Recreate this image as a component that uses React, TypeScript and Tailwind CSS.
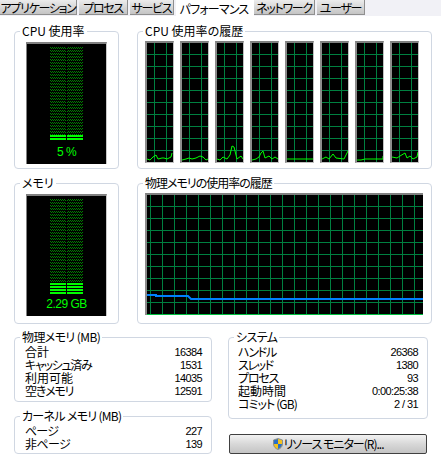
import React from 'react';

const jp = "font-['Noto_Sans_CJK_JP',sans-serif] [font-feature-settings:'palt']";
const num = "font-['Liberation_Sans',sans-serif] text-[11px] tracking-[-0.6px]";

function Tab({ label, width, active }: { label: string; width: number; active?: boolean }) {
  if (active) {
    return (
      <div style={{ width }} className="h-[17px] box-border pt-[1px] bg-white flex items-center justify-center text-[12px] tracking-[-0.8px] whitespace-nowrap leading-none text-black">
        {label}
      </div>
    );
  }
  return (
    <div
      style={{ width }}
      className="h-[15px] box-border pt-[2px] mr-[2px] border-r border-b border-[#8f8f8f] bg-gradient-to-b from-[#ececec] to-[#c4c4c4] flex items-center justify-center text-[12px] tracking-[-1.3px] whitespace-nowrap leading-none text-black"
    >
      {label}
    </div>
  );
}

function Group({ title, titleClass, className, children }: { title: string; titleClass?: string; className: string; children: React.ReactNode }) {
  return (
    <div className={`relative border border-[#d0d7e2] rounded-[4px] ${className}`}>
      <span className={`absolute left-[5px] top-[-9px] bg-white px-[2px] text-[12px] leading-[16px] text-black whitespace-nowrap ${titleClass ?? ''}`}>
        {title}
      </span>
      {children}
    </div>
  );
}

function Meter({ lit, label }: { lit: number[]; label: string }) {
  const top = lit[0];
  const id = `led${label.length}`;
  return (
    <div className="w-[81px] h-[122px] box-border border-t-2 border-l border-r border-t-[#808080] border-l-[#808080] border-r-[#c8c8c8] bg-black flex flex-col items-center">
      <svg width="79" height="98" className="block shrink-0" shapeRendering="crispEdges">
        <defs>
          <pattern id={id} width="2" height="3" patternUnits="userSpaceOnUse">
            <rect x="1" y="0" width="1" height="1" fill="#008000" />
            <rect x="0" y="1" width="1" height="1" fill="#008000" />
          </pattern>
        </defs>
        <rect x="23" y="3" width="16" height={top - 3} fill={`url(#${id})`} />
        <rect x="40" y="3" width="16" height={top - 3} fill={`url(#${id})`} />
        {lit.map((y) => (
          <g key={y}>
            <rect x="23" y={y} width="16" height="2" fill="#00ff00" />
            <rect x="40" y={y} width="16" height="2" fill="#00ff00" />
          </g>
        ))}
      </svg>
      <span className="text-[#00ff00] text-[12px] leading-[14px] mt-[3px] tracking-[-0.5px] font-['Liberation_Sans',sans-serif]">{label}</span>
    </div>
  );
}

function CpuGraph({ points }: { points: string }) {
  const rows = [11, 23, 35, 47, 59, 71, 83, 95, 107];
  return (
    <div className="w-[29px] h-[122px] box-border border-t-2 border-l-2 border-r border-b border-t-[#808080] border-l-[#8c8c8c] border-r-[#c0c0c0] border-b-[#c0c0c0] bg-black">
      <svg width="26" height="119" className="block" shapeRendering="crispEdges">
        {rows.map((y) => (
          <line key={y} x1="0" x2="26" y1={y + 0.5} y2={y + 0.5} stroke="#008040" />
        ))}
        <line x1="7.5" x2="7.5" y1="0" y2="119" stroke="#008040" />
        <line x1="19.5" x2="19.5" y1="0" y2="119" stroke="#008040" />
        <polyline points={points} fill="none" stroke="#00ff00" strokeWidth="1" shapeRendering="auto" />
      </svg>
    </div>
  );
}

function MemoryGraph() {
  const rows = [11, 23, 35, 47, 59, 71, 83, 95, 107];
  const cols = Array.from({ length: 23 }, (_, i) => 3.5 + i * 12);
  return (
    <div className="w-[278px] h-[122px] box-border border-t-2 border-l-2 border-t-[#808080] border-l-[#8c8c8c] bg-black">
      <svg width="276" height="120" className="block" shapeRendering="crispEdges">
        {rows.map((y) => (
          <line key={y} x1="0" x2="276" y1={y + 0.5} y2={y + 0.5} stroke="#008040" />
        ))}
        {cols.map((x) => (
          <line key={x} x1={x} x2={x} y1="0" y2="120" stroke="#008040" />
        ))}
        <line x1="0" x2="276" y1="119.5" y2="119.5" stroke="#00c040" />
        <polyline
          points="0,100 9,100 9,101 41,101 44,104 276,104"
          fill="none"
          stroke="#0080ff"
          strokeWidth="2"
          shapeRendering="auto"
        />
      </svg>
    </div>
  );
}

function Row({ label, value, tight }: { label: string; value: string; tight?: string }) {
  return (
    <div className="flex justify-between items-center h-[13px]">
      <span className={`block text-[12px] leading-[12px] h-[12px] text-black whitespace-nowrap ${tight ?? ''}`}>{label}</span>
      <span className={`block leading-[12px] h-[12px] ${num} text-black`}>{value}</span>
    </div>
  );
}

function Shield() {
  return (
    <svg width="10" height="12" viewBox="0 0 10 12" className="block mr-[1px]">
      <path d="M5 0.5 L9.5 2 V6 C9.5 9 7 10.8 5 11.5 C3 10.8 0.5 9 0.5 6 V2 Z" fill="#f4c21a" stroke="#6f7f99" strokeWidth="0.8" />
      <path d="M5 1 V6 H1 V2.3 Z" fill="#2a6fc9" />
      <path d="M5 6 H9 C8.8 8.6 6.8 10.2 5 11 Z" fill="#2a6fc9" />
    </svg>
  );
}

const cpuLines = [
  '0,116 3,117 6,114 9,112 11,116 15,115 17,115 20,116 24,114 25,110',
  '0,117 4,116 7,115 10,116 14,115 18,113 21,114 24,117 26,116',
  '0,116 3,117 6,114 10,116 13,112 15,103 17,104 20,116 24,113 26,116',
  '0,117 4,116 7,114 9,110 11,108 13,115 17,113 20,116 23,114 26,116',
  '0,116 26,116',
  '0,116 4,114 7,116 11,111 14,115 22,116 25,110 26,108',
  '0,117 4,117 8,116 26,116 26,113',
  '0,114 5,115 8,113 13,110 15,115 18,113 21,116 25,114 26,109',
];

export default function App() {
  return (
    <div className={`w-[441px] h-[461px] bg-white overflow-hidden ${jp}`}>
      <div className="flex h-[16px] items-start bg-[#f1f1f6]">
        <Tab label="アプリケーション" width={77} />
        <Tab label="プロセス" width={49} />
        <Tab label="サービス" width={44} />
        <Tab label="パフォーマンス" width={76} active />
        <div className="w-[2px] h-[16px] bg-white" />
        <Tab label="ネットワーク" width={61} />
        <Tab label="ユーザー" width={48} />
      </div>

      <div className="pl-[14px] pt-[15px]">
        <div className="flex gap-[18px]">
          <Group title="CPU 使用率" className="w-[105px] h-[138px] shrink-0 pl-[11px] pt-[10px]">
            <Meter lit={[91, 94]} label="5 %" />
          </Group>
          <Group title="CPU 使用率の履歴" className="w-[295px] h-[138px] shrink-0 pl-[7px] pt-[9px]">
            <div className="flex gap-[6px]">
              {cpuLines.map((p, i) => (
                <CpuGraph key={i} points={p} />
              ))}
            </div>
          </Group>
        </div>

        <div className="flex gap-[18px] mt-[14px]">
          <Group title="メモリ" className="w-[105px] h-[141px] shrink-0 pl-[11px] pt-[10px]">
            <Meter lit={[87, 90, 93, 96]} label="2.29 GB" />
          </Group>
          <Group title="物理メモリの使用率の履歴" titleClass="tracking-[-1px]" className="w-[295px] h-[141px] shrink-0 pl-[7px] pt-[9px]">
            <MemoryGraph />
          </Group>
        </div>

        <div className="flex gap-[16px] mt-[13px]">
          <div className="w-[198px] shrink-0 flex flex-col gap-[14px]">
            <Group title="物理メモリ (MB)" titleClass="tracking-[-0.6px]" className="h-[65px] pl-[10px] pr-[9px] pt-[7px]">
              <Row label="合計" value="16384" />
              <Row label="キャッシュ済み" value="1531" tight="tracking-[-1.3px]" />
              <Row label="利用可能" value="14035" />
              <Row label="空きメモリ" value="12591" tight="tracking-[-1.2px]" />
            </Group>
            <Group title="カーネル メモリ (MB)" titleClass="tracking-[-0.7px]" className="h-[38px] pl-[10px] pr-[9px] pt-[7px]">
              <Row label="ページ" value="227" tight="tracking-[-0.8px]" />
              <Row label="非ページ" value="139" tight="tracking-[-0.6px]" />
            </Group>
          </div>
          <div className="w-[200px] shrink-0 flex flex-col">
            <Group title="システム" titleClass="tracking-[-0.6px]" className="h-[82px] pl-[9px] pr-[9px] pt-[7px]">
              <Row label="ハンドル" value="26368" tight="tracking-[-1.2px]" />
              <Row label="スレッド" value="1380" tight="tracking-[-1.4px]" />
              <Row label="プロセス" value="93" tight="tracking-[-1.2px]" />
              <Row label="起動時間" value="0:00:25:38" />
              <Row label="コミット (GB)" value="2 / 31" tight="tracking-[-0.9px]" />
            </Group>
            <div className="mt-[15px] ml-[1px] w-[198px] h-[20px] border border-[#404040] rounded-[2px] bg-gradient-to-b from-[#f2f2f2] via-[#d8d8d8] to-[#c4c4c4] flex items-center justify-center text-[12px] tracking-[-1px] whitespace-nowrap leading-none text-black">
              <Shield />
              リソース モニター(R)...
            </div>
          </div>
        </div>
      </div>
    </div>
  );
}
